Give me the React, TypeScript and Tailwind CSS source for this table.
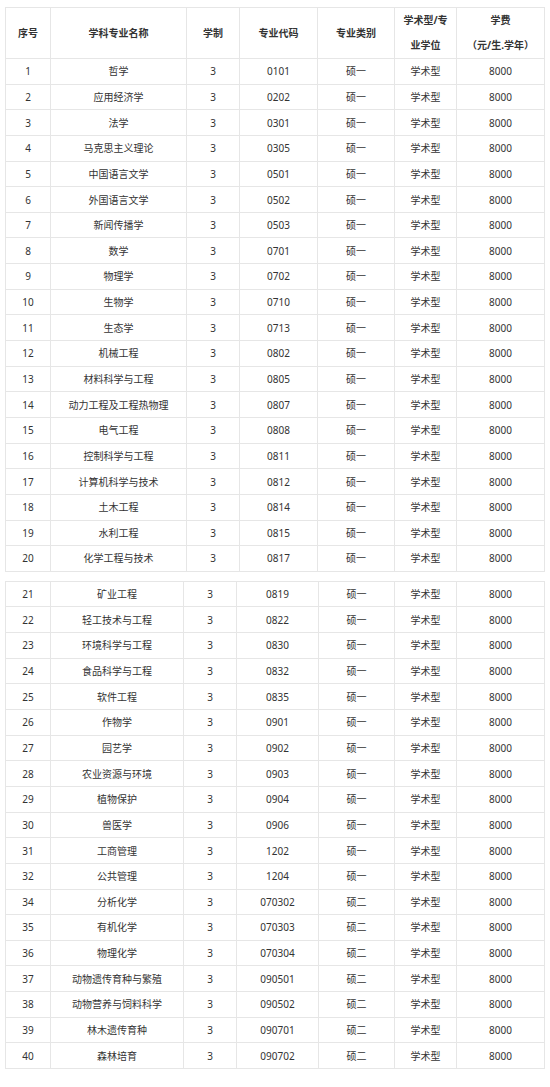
import React from 'react';

type Row = [string, string, string, string];

const first: Row[] = [
  ['1', '哲学', '0101', '硕一'],
  ['2', '应用经济学', '0202', '硕一'],
  ['3', '法学', '0301', '硕一'],
  ['4', '马克思主义理论', '0305', '硕一'],
  ['5', '中国语言文学', '0501', '硕一'],
  ['6', '外国语言文学', '0502', '硕一'],
  ['7', '新闻传播学', '0503', '硕一'],
  ['8', '数学', '0701', '硕一'],
  ['9', '物理学', '0702', '硕一'],
  ['10', '生物学', '0710', '硕一'],
  ['11', '生态学', '0713', '硕一'],
  ['12', '机械工程', '0802', '硕一'],
  ['13', '材料科学与工程', '0805', '硕一'],
  ['14', '动力工程及工程热物理', '0807', '硕一'],
  ['15', '电气工程', '0808', '硕一'],
  ['16', '控制科学与工程', '0811', '硕一'],
  ['17', '计算机科学与技术', '0812', '硕一'],
  ['18', '土木工程', '0814', '硕一'],
  ['19', '水利工程', '0815', '硕一'],
  ['20', '化学工程与技术', '0817', '硕一'],
];

const second: Row[] = [
  ['21', '矿业工程', '0819', '硕一'],
  ['22', '轻工技术与工程', '0822', '硕一'],
  ['23', '环境科学与工程', '0830', '硕一'],
  ['24', '食品科学与工程', '0832', '硕一'],
  ['25', '软件工程', '0835', '硕一'],
  ['26', '作物学', '0901', '硕一'],
  ['27', '园艺学', '0902', '硕一'],
  ['28', '农业资源与环境', '0903', '硕一'],
  ['29', '植物保护', '0904', '硕一'],
  ['30', '兽医学', '0906', '硕一'],
  ['31', '工商管理', '1202', '硕一'],
  ['32', '公共管理', '1204', '硕一'],
  ['34', '分析化学', '070302', '硕二'],
  ['35', '有机化学', '070303', '硕二'],
  ['36', '物理化学', '070304', '硕二'],
  ['37', '动物遗传育种与繁殖', '090501', '硕二'],
  ['38', '动物营养与饲料科学', '090502', '硕二'],
  ['39', '林木遗传育种', '090701', '硕二'],
  ['40', '森林培育', '090702', '硕二'],
];

const td = 'border border-[#e6e6e6] p-0 text-center align-middle';

function Body({ rows }: { rows: Row[] }) {
  return (
    <tbody>
      {rows.map(([no, name, code, kind]) => (
        <tr key={no} className="h-[25.65px]">
          <td className={td}>{no}</td>
          <td className={td}>{name}</td>
          <td className={td}>3</td>
          <td className={td}>{code}</td>
          <td className={td}>{kind}</td>
          <td className={td}>学术型</td>
          <td className={td}>8000</td>
        </tr>
      ))}
    </tbody>
  );
}

export default function App() {
  return (
    <div
      className="min-h-[1087px] bg-white pl-[5px] pt-[7px] text-[10px] leading-none text-[#333]"
      style={{ fontFamily: '"Noto Sans", "Noto Sans CJK SC", sans-serif' }}
    >
      <table className="w-[539px] table-fixed border-collapse">
        <colgroup>
          <col className="w-[45px]" />
          <col className="w-[136px]" />
          <col className="w-[53px]" />
          <col className="w-[78px]" />
          <col className="w-[77px]" />
          <col className="w-[62px]" />
          <col className="w-[88px]" />
        </colgroup>
        <thead>
          <tr className="h-[51px] font-bold">
            <td className={td}>序号</td>
            <td className={td}>学科专业名称</td>
            <td className={td}>学制</td>
            <td className={td}>专业代码</td>
            <td className={td}>专业类别</td>
            <td className={`${td} leading-[25px]`}>
              学术型/专
              <br />
              业学位
            </td>
            <td className={`${td} leading-[25px]`}>
              学费
              <br />
              （元/生.学年）
            </td>
          </tr>
        </thead>
        <Body rows={first} />
      </table>

      <table className="mt-[9px] w-[539px] table-fixed border-collapse">
        <colgroup>
          <col className="w-[45px]" />
          <col className="w-[133px]" />
          <col className="w-[53px]" />
          <col className="w-[82px]" />
          <col className="w-[76px]" />
          <col className="w-[62px]" />
          <col className="w-[88px]" />
        </colgroup>
        <Body rows={second} />
      </table>
    </div>
  );
}
